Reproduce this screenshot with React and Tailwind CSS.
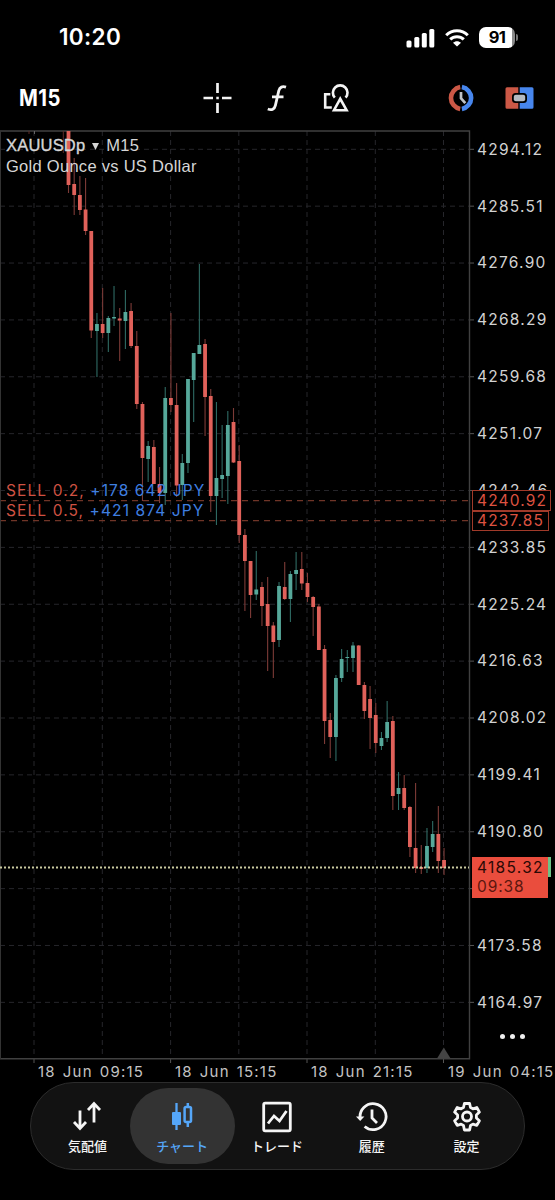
import React from "react";

// [wick top, body top, body bottom, wick bottom, direction]
const candles = [
  [131, 131, 185, 193, 0], [158, 184, 195, 215, 0], [176, 195, 210, 215, 0], [178, 209.5, 231, 235, 0],
  [231, 231, 330.5, 338, 0], [313, 324, 331, 377, 1], [288, 324, 333, 338, 0], [316, 318, 333, 352, 1],
  [286, 317, 318.5, 326, 1], [308, 318.5, 320.5, 361, 0], [290, 312, 321, 349, 1], [303, 311, 346, 348, 0],
  [331, 346, 404, 409, 0], [402, 404, 458, 501, 0], [441, 446, 459, 482, 1], [440, 447, 484, 484, 0],
  [467, 484, 493, 503, 0], [387, 398, 493, 505, 1], [313, 398, 405, 412, 0], [383, 405, 485.5, 497, 0],
  [454, 463, 485, 500, 1], [379, 379, 463, 473, 1], [353, 353, 380, 422, 1], [264, 345, 354, 354, 1],
  [339, 344, 397, 436, 0], [389, 396, 496, 512, 0], [402, 478, 496, 525, 1], [425, 475, 479, 498, 1],
  [411, 425, 476, 504, 1], [408, 422, 462.5, 463, 0], [445, 461, 535, 543, 0], [529, 535, 561, 611, 0],
  [561, 561, 595, 618, 0], [551, 589.5, 594.5, 600, 1], [582, 587, 606, 626, 0], [577, 604, 626, 671, 0],
  [622, 625.5, 642, 678, 0], [582, 586, 640, 647, 1], [562, 587, 599, 600, 0], [571, 574, 599, 622, 1],
  [552, 570, 574, 590, 1], [552, 569, 583.5, 590, 0], [573, 583, 597, 602, 0], [596, 597, 607, 636, 0],
  [604, 606.5, 650, 650, 0], [645, 649, 721, 744, 0], [713, 720, 737, 758, 0], [675, 678, 737, 761, 1],
  [649, 659, 678, 682, 1], [650, 657, 658, 672, 1], [642, 645.5, 658, 672, 1], [645, 645.5, 685, 685, 0],
  [682, 685, 711, 719, 0], [686, 699, 718, 749, 0], [703, 715, 743, 753, 0], [732, 738, 746, 750, 1],
  [701, 722, 738, 742, 1], [716, 721, 796, 810, 0], [772, 788, 794, 810, 1], [775, 788, 808, 810, 0],
  [806, 807, 847, 857, 0], [783, 848, 868, 873, 0], [845, 867, 869, 874, 0], [828, 846, 868, 873, 1],
  [821, 834, 847, 852, 1], [806, 834, 861, 873, 0], [848, 860, 868, 875, 0],
];
const prices = ["4294.12", "4285.51", "4276.90", "4268.29", "4259.68", "4251.07", "4242.46", "4233.85", "4225.24", "4216.63", "4208.02", "4199.41", "4190.80", "", "4173.58", "4164.97"];
const columns = [34, 102.3, 170.6, 238.8, 307, 375.3, 443.5];

function StatusBar() {
  return (
    <header className="flex h-[72px] items-center justify-between pl-[59px] pr-[37px] pt-[3px]">
      <span className="text-[22.5px] font-semibold leading-none tracking-[0.35px]">10:20</span>
      <div className="flex items-center gap-[10px]">
        <svg width="29" height="20" viewBox="0 0 29 20" fill="#fff">
          <rect x="0.5" y="12.5" width="5" height="7" rx="1.5" />
          <rect x="8.3" y="9" width="5" height="10.5" rx="1.5" />
          <rect x="15.8" y="5" width="5" height="14.5" rx="1.5" />
          <rect x="23.3" y="1" width="5" height="18.5" rx="1.5" />
        </svg>
        <svg width="24" height="19" viewBox="0 0 24 19" fill="none" stroke="#fff" strokeWidth="3">
          <path d="M1.2 7.2C7.2 1.2 16.8 1.2 22.8 7.2" />
          <path d="M5.2 11.4c3.8-3.7 9.8-3.7 13.6 0" />
          <path d="M12 18.6 8 14.8c2.2-2.1 5.8-2.1 8 0Z" fill="#fff" stroke="none" />
        </svg>
        <div className="flex items-center gap-[1px]">
          <div className="flex h-[21px] w-[36px] items-center justify-center rounded-[7px] bg-[linear-gradient(90deg,#fff_91%,#8a8a8a_91%)] text-[16.5px] font-bold leading-none tracking-[-0.6px] text-black">91</div>
          <div className="h-[7px] w-[2px] rounded-r-full bg-[#777]" />
        </div>
      </div>
    </header>
  );
}

function Toolbar() {
  return (
    <div className="flex h-[58px] items-center pb-[7px] pl-[19px]">
      <div className="w-[183px] pt-[3px]">
        <span className="inline-block origin-left scale-x-[0.88] text-[23px] font-bold leading-none tracking-[0.5px]">M15</span>
      </div>
      <svg width="31" height="32" viewBox="0 0 31 32" stroke="#f4f4f4" strokeWidth="2.7">
        <path d="M15.5 1v10M15.5 21v10M1.5 16H11M20 16h9.5M14.3 16h2.5" />
      </svg>
      <svg className="ml-[33px]" width="22" height="32" viewBox="0 0 22 32" fill="none" stroke="#f4f4f4" strokeWidth="2.8">
        <path d="M20 5.2c-3.6-1.2-6.3-.2-7.2 3.4L9.4 23.4c-.9 3.9-3.6 5.2-7.6 3.6M6 14.8h11.5" />
      </svg>
      <svg className="ml-[34px]" width="30" height="32" viewBox="0 0 30 32" fill="none" stroke="#f4f4f4" strokeWidth="2.6">
        <path d="M12.8 15.6a7.3 7.3 0 1 1 10.8 0" />
        <path d="M18.2 16.8 12 28.2h12.6Z" />
        <path d="M8.3 12.3H3.2v13.2h6.6" />
      </svg>
      <svg className="ml-[94px]" width="30" height="32" viewBox="0 0 30 32" fill="none">
        <path d="M14.2 5.1a11.4 11.1 0 0 0 0 21.8" stroke="#cc5846" strokeWidth="4.6" />
        <path d="M15.9 5.1a11.4 11.1 0 0 1 0 21.8" stroke="#4786ed" strokeWidth="4.6" />
        <path d="M15 10v6.3l4.3 4.9" stroke="#bfc2c6" strokeWidth="2.7" />
      </svg>
      <svg className="ml-[28px]" width="30" height="32" viewBox="0 0 30 32">
        <path d="M3 5.3h11.3v21.4H3a1.5 1.5 0 0 1-1.5-1.5V6.8A1.5 1.5 0 0 1 3 5.3Z" fill="#cc5846" />
        <path d="M15.7 5.3H28a1.5 1.5 0 0 1 1.5 1.5v18.4a1.5 1.5 0 0 1-1.5 1.5H15.7Z" fill="#4786ed" />
        <rect x="8" y="11" width="15" height="10" rx="3.5" fill="#000" />
        <rect x="9.8" y="12.8" width="11.4" height="6.4" rx="2" fill="#b5bac2" />
      </svg>
    </div>
  );
}

function Plot() {
  return (
    <svg className="block" width="476" height="937" viewBox="0 130 476 937" fill="none">
      <g stroke="#26262b" strokeWidth="1" strokeDasharray="5 4">
        {columns.map((x) => <path key={x} d={`M${x} 131V1058`} />)}
        {prices.map((p, i) => <path key={i} d={`M0 ${149.3 + i * 56.87}H469`} />)}
      </g>
      <g stroke="#555" strokeWidth="1">
        {prices.map((p, i) => <path key={i} d={`M470 ${149.3 + i * 56.87}h4`} />)}
        {columns.filter((x, i) => i % 2 === 0).map((x) => <path key={x} d={`M${x} 1059v4`} />)}
      </g>
      <path d="M0 500.7H469M0 520.7H469" stroke="#6f3427" strokeWidth="1.2" strokeDasharray="6 5" />
      <path d="M0 131H469.5V1058.7H0" stroke="#404040" strokeWidth="1.4" />
      <path d="M.5 131v928" stroke="#333" />
      <path d="M63.3 131v22" stroke="#5d2c29" />
      <path d="M29 131v3" stroke="#5d2c29" />
      <path d="M34.5 131v3" stroke="#666" />
      {candles.map(([high, top, bottom, low, up], i) => {
        const x = 68.5 + i * 5.69;
        return (
          <g key={i}>
            <path d={`M${x} ${high}V${low}`} stroke={up ? "#2f6b64" : "#7d3b37"} strokeWidth="1.1" />
            <rect x={x - 1.9} y={top} width="3.8" height={bottom - top} fill={up ? "#56a89a" : "#e0615a"} />
          </g>
        );
      })}
      <path d="M0 867.5H469" stroke="#c9c9a0" strokeWidth="2" strokeDasharray="2 2" />
      <path d="M443.8 1047.5 437 1058.5h13.6Z" fill="#444" />
    </svg>
  );
}

function PriceAxis() {
  return (
    <div className="relative h-[937px] flex-1 text-[15.5px] tracking-[1.25px] text-[#d2d2d2]">
      <div className="-mt-[9px] flex flex-col">
        {prices.map((p, i) => (
          <div key={i} className="flex h-[56.87px] items-center pl-[1px] leading-none">{p}</div>
        ))}
      </div>
      <div className="absolute -left-[4px] top-[360px] flex h-[21px] w-[79px] items-center border border-[#a03a2a] bg-black pl-[4px] tracking-[1.15px] text-[#dc5240]">4240.92</div>
      <div className="absolute -left-[4px] top-[381px] flex h-[20px] w-[77px] items-center border border-[#a03a2a] bg-black pl-[4px] tracking-[1.15px] text-[#dc5240]">4237.85</div>
      <div className="absolute -left-[3px] top-[727px] h-[20px] w-[78px] bg-[#6cc287]" />
      <div className="absolute -left-[4px] top-[727px] flex h-[41px] w-[76px] flex-col bg-[#ea4d3d] pl-[5px] pt-[1px] leading-[19px] tracking-[1.3px] text-[#2a0905]">
        <span>4185.32</span>
        <span className="tracking-[0.9px] text-[#5c160e]">09:38</span>
      </div>
      <div className="absolute left-[24px] top-[904px] flex gap-[5px]">
        <i className="size-[5px] rounded-full bg-[#eee]" />
        <i className="size-[5px] rounded-full bg-[#eee]" />
        <i className="size-[5px] rounded-full bg-[#eee]" />
      </div>
    </div>
  );
}

function Chart() {
  return (
    <section className="relative">
      <div className="flex">
        <Plot />
        <PriceAxis />
      </div>
      <div className="absolute left-[6px] top-[5px] font-['Liberation_Sans',sans-serif] text-[16.5px] leading-[21px] tracking-[0.28px] text-[#d6d6d6]">
        <div className="flex items-center whitespace-nowrap">
          <span className="tracking-[0.2px] [-webkit-text-stroke:0.35px_#d6d6d6]">XAUUSDp</span>
          <svg className="ml-[7px] mr-[7px]" width="7" height="8"><path d="M0 1h7L3.5 8Z" fill="#d6d6d6" /></svg>
          <span>M15</span>
        </div>
        <div className="whitespace-nowrap">Gold Ounce vs US Dollar</div>
      </div>
      <div className="absolute left-[6px] top-[351px] text-[15.5px] leading-[20px] tracking-[1.1px] text-[#3f7fe0]">
        <div className="whitespace-nowrap"><span className="text-[#cf5243]">SELL 0.2,</span> +178 642 JPY</div>
        <div className="whitespace-nowrap"><span className="text-[#cf5243]">SELL 0.5,</span> +421 874 JPY</div>
      </div>
      <div className="grid h-[15px] grid-cols-[137px_136px_137px_1fr] whitespace-nowrap pl-[38px] text-[15px] leading-[10px] tracking-[1.2px] [word-spacing:1.6px] text-[#c4c4c4]">
        <span>18 Jun 09:15</span>
        <span>18 Jun 15:15</span>
        <span>18 Jun 21:15</span>
        <span>19 Jun 04:15</span>
      </div>
    </section>
  );
}

const tabs = [
  ["気配値", <><path d="M9 9.5v17M3 21l6 6.5 6-6.5" /><path d="M23 21.5V3.5M17 9l6-6.5L29 9" /></>],
  ["チャート", <><path d="M10.5 2v27" strokeWidth="2.3" /><rect x="6" y="11" width="9" height="13" rx="1" fill="currentColor" stroke="none" /><path d="M21.8 2v4M21.8 21v5" strokeWidth="2.5" /><rect x="18.6" y="6" width="6.4" height="15" rx="1.5" strokeWidth="2.5" /></>],
  ["トレード", <><rect x="2.7" y="2.2" width="26.6" height="27.6" rx="1.5" /><path d="m7 22.5 6-7.5 5.5 5L25.5 10" /></>],
  ["履歴", <><path d="M4.2 17.5a13 13 0 1 1 4.4 8" /><path d="M0 15.5h8.4L4.2 20Z" fill="currentColor" stroke="none" /><path d="M16 8.5v8.5l5 5" /></>],
  ["設定", <><path d="M13.4 2.5h5.2l.9 4 2.4 1.3 3.9-1.3 2.6 4.6-3 2.8v3.1l3 2.8-2.6 4.6-3.9-1.3-2.4 1.4-.9 4.5h-5.2l-.9-4.5-2.4-1.4-3.9 1.3-2.6-4.6 3-2.8v-3.1l-3-2.8 2.6-4.6 3.9 1.3 2.4-1.3Z" strokeLinejoin="round" /><circle cx="16" cy="15.5" r="4.5" /></>],
];

function TabBar() {
  return (
    <nav className="mx-[30px] grid h-[88px] grid-cols-[repeat(5,94.8px)] items-center rounded-[44px] border border-[#2c2c2c] bg-[#121212] pl-[9px]">
      {tabs.map(([label, icon], i) => (
        <div
          key={label}
          className={
            i === 1
              ? "-mx-[5px] flex h-[76px] flex-col items-center rounded-[38px] bg-[#333] pt-[13px] text-[#55a6f8]"
              : "flex h-[76px] flex-col items-center pt-[13px] text-[#f5f5f5]"
          }
        >
          <svg width="32" height="32" viewBox="0 0 32 32" fill="none" stroke="currentColor" strokeWidth="2.8">{icon}</svg>
          <span className="mt-[4px] whitespace-nowrap font-['Noto_Sans_CJK_JP',sans-serif] text-[13px] font-medium leading-[18px]">{label}</span>
        </div>
      ))}
    </nav>
  );
}

export default function App() {
  return (
    <main className="h-[1200px] w-[555px] overflow-hidden bg-black font-[Inter,sans-serif] text-white">
      <StatusBar />
      <Toolbar />
      <Chart />
      <TabBar />
    </main>
  );
}
